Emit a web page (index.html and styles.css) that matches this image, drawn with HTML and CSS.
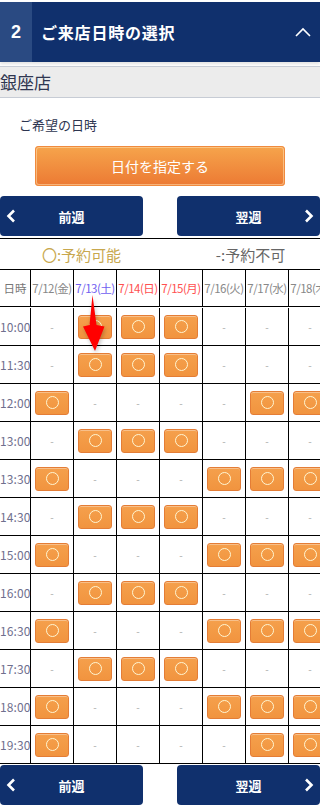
FILE: index.html
```html
<!DOCTYPE html>
<html lang="ja">
<head>
<meta charset="utf-8">
<link rel="stylesheet" href="styles.css">
</head>
<body>
<div class="page">
  <div class="step-head">
    <div class="step-num">2</div>
    <div class="step-title">ご来店日時の選択</div>
    <svg class="step-toggle" width="16" height="10" viewBox="0 0 16 10"><polyline points="1,9 8,2 15,9" fill="none" stroke="#fff" stroke-width="1.6"/></svg>
  </div>
  <div class="shop-bar">銀座店</div>
  <div class="label">ご希望の日時</div>
  <div class="date-btn-wrap"><div class="date-btn">日付を指定する</div></div>
  <div class="week-nav">
    <div class="week-btn prev"><svg class="chev" width="10" height="14" viewBox="0 0 10 14"><polyline points="8,1.5 2.5,7 8,12.5" fill="none" stroke="#fff" stroke-width="2.6"/></svg><span>前週</span></div>
    <div class="week-btn next"><span>翌週</span><svg class="chev" width="10" height="14" viewBox="0 0 10 14"><polyline points="2,1.5 7.5,7 2,12.5" fill="none" stroke="#fff" stroke-width="2.6"/></svg></div>
  </div>
  <div class="cal-wrap">
    <div class="legend">
      <div class="legend-item ok">〇:予約可能</div>
      <div class="legend-item ng">-:予約不可</div>
    </div>
    <div class="grid" id="grid">
      <div class="cell hd time-hd">日時</div>
      <div class="cell hd">7/12(金)</div>
      <div class="cell hd sat">7/13(土)</div>
      <div class="cell hd sun">7/14(日)</div>
      <div class="cell hd sun">7/15(月)</div>
      <div class="cell hd">7/16(火)</div>
      <div class="cell hd">7/17(水)</div>
      <div class="cell hd">7/18(木)</div>
    </div>
    <svg class="arrow" width="30" height="62" viewBox="0 0 30 62">
      <polygon points="10.5,0 14.5,30 22.5,31.5 13,56 1,31.5 7.5,30" fill="#ff0000"/>
    </svg>
  </div>
  <div class="week-nav bottom">
    <div class="week-btn prev"><svg class="chev" width="10" height="14" viewBox="0 0 10 14"><polyline points="8,1.5 2.5,7 8,12.5" fill="none" stroke="#fff" stroke-width="2.6"/></svg><span>前週</span></div>
    <div class="week-btn next"><span>翌週</span><svg class="chev" width="10" height="14" viewBox="0 0 10 14"><polyline points="2,1.5 7.5,7 2,12.5" fill="none" stroke="#fff" stroke-width="2.6"/></svg></div>
  </div>
</div>
<script>
var rows = [
  ["10:00","-OOO---"],
  ["11:30","-OOO---"],
  ["12:00","O----OO"],
  ["13:00","-OOO---"],
  ["13:30","O---OOO"],
  ["14:30","-OOO---"],
  ["15:00","O---OOO"],
  ["16:00","-OOO---"],
  ["16:30","O---OOO"],
  ["17:30","-OOO---"],
  ["18:00","O---OOO"],
  ["19:30","O----OO"]
];
var g = document.getElementById("grid");
var html = "";
rows.forEach(function(r){
  html += '<div class="cell time">' + r[0] + '</div>';
  for (var i = 0; i < 7; i++) {
    if (r[1][i] === "O") {
      html += '<div class="cell"><span class="slot"><span class="ring"></span></span></div>';
    } else {
      html += '<div class="cell"><span class="dash">-</span></div>';
    }
  }
});
g.insertAdjacentHTML("beforeend", html);
</script>
</body>
</html>
```

FILE: styles.css
```css
html, body {
  margin: 0;
  padding: 0;
  background: #fff;
}
body {
  font-family: "Noto Sans CJK JP", "Noto Sans", sans-serif;
  color: #333;
}
.page {
  width: 320px;
  overflow: hidden;
  padding-top: 2px;
}
.step-head {
  display: flex;
  align-items: center;
  height: 60px;
  background: #10306d;
  color: #fff;
  box-shadow: 0 2px 3px rgba(0, 0, 0, 0.12);
}
.step-num {
  width: 32px;
  height: 60px;
  display: flex;
  align-items: center;
  justify-content: center;
  background: #2a4a82;
  font-family: "Liberation Sans", sans-serif;
  font-weight: bold;
  font-size: 18px;
}
.step-title {
  flex: 1;
  padding-left: 9px;
  font-size: 16px;
  font-weight: bold;
  letter-spacing: 0.8px;
}
.step-toggle {
  margin-right: 9px;
}
.shop-bar {
  margin-top: 4px;
  height: 30px;
  border-top: 1px solid #c7ccd5;
  border-bottom: 1px solid #c7ccd5;
  background: #ececec;
  font-size: 17px;
  line-height: 30px;
  color: #2f3650;
}
.label {
  margin-top: 17px;
  padding-left: 19px;
  font-size: 13px;
  line-height: 20px;
  color: #2d3550;
}
.date-btn-wrap {
  margin-top: 11px;
  display: flex;
  justify-content: center;
}
.date-btn {
  width: 250px;
  height: 40px;
  box-sizing: border-box;
  border-radius: 4px;
  background: linear-gradient(#f6a54c, #ec7933);
  box-shadow: inset 0 0 0 1px #f08a3e, inset 0 0 0 2px rgba(255, 225, 180, 0.55);
  color: #fff;
  font-size: 14px;
  display: flex;
  align-items: center;
  justify-content: center;
}
.week-nav {
  margin-top: 10px;
  display: flex;
  justify-content: space-between;
}
.week-nav.bottom {
  margin-top: 1px;
}
.week-btn {
  width: 143px;
  height: 40px;
  border-radius: 4px;
  background: #10306d;
  color: #fff;
  font-size: 13px;
  font-weight: bold;
  display: flex;
  align-items: center;
}
.week-btn span {
  flex: 1;
  text-align: center;
}
.week-btn.prev .chev {
  margin-left: 6px;
}
.week-btn.prev span {
  padding-right: 16px;
}
.week-btn.next .chev {
  margin-right: 6px;
}
.week-btn.next span {
  padding-left: 16px;
}
.cal-wrap {
  margin-top: 2px;
  position: relative;
}
.legend {
  width: 332px;
  height: 31px;
  box-sizing: border-box;
  border-top: 1px solid #000;
  display: flex;
  align-items: center;
  font-size: 15px;
}
.legend-item {
  width: 166px;
  text-align: center;
}
.legend-item.ok {
  color: #c8a84e;
  padding-right: 6px;
}
.legend-item.ng {
  color: #666;
}
.grid {
  display: grid;
  grid-template-columns: 31px repeat(7, 43px);
  grid-auto-rows: 38px;
  width: 332px;
  border-top: 1px solid #000;
}
.cell {
  box-sizing: border-box;
  border-right: 1px solid #000;
  border-bottom: 1px solid #000;
  display: flex;
  align-items: center;
  justify-content: center;
}
.cell.hd {
  font-size: 11.5px;
  color: #888;
  letter-spacing: -0.5px;
  white-space: nowrap;
}
.grid .cell:nth-child(-n+8) {
  height: 37px;
}
.cell.hd.sat {
  color: #7060f0;
}
.cell.hd.sun {
  color: #ff5050;
}
.cell.time-hd {
  font-size: 11.5px;
  color: #777;
  letter-spacing: 0;
}
.cell.time {
  justify-content: flex-start;
  padding-left: 0;
  font-size: 12px;
  color: #6f6f8e;
  letter-spacing: 0.1px;
}
.dash {
  color: #aaa;
  font-size: 10px;
}
.slot {
  width: 34px;
  height: 24px;
  box-sizing: border-box;
  border-radius: 3px;
  background: linear-gradient(#f5a04c, #f1943f);
  border: 1px solid #e47d36;
  box-shadow: inset 0 1px 0 #f8c08a;
  display: flex;
  align-items: center;
  justify-content: center;
}
.ring {
  width: 11px;
  height: 11px;
  border-radius: 50%;
  border: 1.2px solid #fff6d2;
}
.arrow {
  position: absolute;
  left: 82px;
  top: 57px;
  filter: drop-shadow(1px 2px 2px rgba(0, 0, 0, 0.25));
}
```
